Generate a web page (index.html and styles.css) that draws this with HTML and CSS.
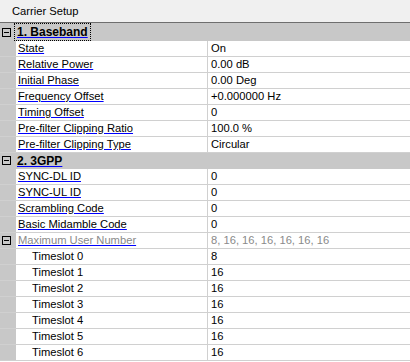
FILE: index.html
```html
<!DOCTYPE html>
<html>
<head>
<meta charset="utf-8">
<link rel="stylesheet" href="styles.css">
</head>
<body>
<div class="panel">
  <div class="title">Carrier Setup</div>
  <div class="grid">
    <div class="row cat">
      <div class="margin"><svg class="box" width="9" height="9" viewBox="0 0 9 9"><rect x="0.5" y="0.5" width="8" height="8" fill="none" stroke="#000"/><line x1="2" y1="4.5" x2="7" y2="4.5" stroke="#000"/></svg></div>
      <div class="catlabel"><span class="focus"><span class="link">1. Baseband</span></span></div>
    </div>
    <div class="row"><div class="margin"></div><div class="label"><span class="link">State</span></div><div class="value">On</div></div>
    <div class="row"><div class="margin"></div><div class="label"><span class="link">Relative Power</span></div><div class="value">0.00 dB</div></div>
    <div class="row"><div class="margin"></div><div class="label"><span class="link">Initial Phase</span></div><div class="value">0.00 Deg</div></div>
    <div class="row"><div class="margin"></div><div class="label"><span class="link">Frequency Offset</span></div><div class="value">+0.000000 Hz</div></div>
    <div class="row"><div class="margin"></div><div class="label"><span class="link">Timing Offset</span></div><div class="value">0</div></div>
    <div class="row"><div class="margin"></div><div class="label"><span class="link">Pre-filter Clipping Ratio</span></div><div class="value">100.0 %</div></div>
    <div class="row"><div class="margin"></div><div class="label"><span class="link">Pre-filter Clipping Type</span></div><div class="value">Circular</div></div>
    <div class="row cat">
      <div class="margin"><svg class="box" width="9" height="9" viewBox="0 0 9 9"><rect x="0.5" y="0.5" width="8" height="8" fill="none" stroke="#000"/><line x1="2" y1="4.5" x2="7" y2="4.5" stroke="#000"/></svg></div>
      <div class="catlabel"><span class="plain"><span class="link">2. 3GPP</span></span></div>
    </div>
    <div class="row"><div class="margin"></div><div class="label"><span class="link">SYNC-DL ID</span></div><div class="value">0</div></div>
    <div class="row"><div class="margin"></div><div class="label"><span class="link">SYNC-UL ID</span></div><div class="value">0</div></div>
    <div class="row"><div class="margin"></div><div class="label"><span class="link">Scrambling Code</span></div><div class="value">0</div></div>
    <div class="row"><div class="margin"></div><div class="label"><span class="link">Basic Midamble Code</span></div><div class="value">0</div></div>
    <div class="row disabled">
      <div class="margin"><svg class="box" width="9" height="9" viewBox="0 0 9 9"><rect x="0.5" y="0.5" width="8" height="8" fill="none" stroke="#000"/><line x1="2" y1="4.5" x2="7" y2="4.5" stroke="#000"/></svg></div>
      <div class="label"><span class="link">Maximum User Number</span></div><div class="value">8, 16, 16, 16, 16, 16, 16</div>
    </div>
    <div class="row sub"><div class="margin"></div><div class="label">Timeslot 0</div><div class="value">8</div></div>
    <div class="row sub"><div class="margin"></div><div class="label">Timeslot 1</div><div class="value">16</div></div>
    <div class="row sub"><div class="margin"></div><div class="label">Timeslot 2</div><div class="value">16</div></div>
    <div class="row sub"><div class="margin"></div><div class="label">Timeslot 3</div><div class="value">16</div></div>
    <div class="row sub"><div class="margin"></div><div class="label">Timeslot 4</div><div class="value">16</div></div>
    <div class="row sub"><div class="margin"></div><div class="label">Timeslot 5</div><div class="value">16</div></div>
    <div class="row sub"><div class="margin"></div><div class="label">Timeslot 6</div><div class="value">16</div></div>
  </div>
</div>
</body>
</html>
```
FILE: styles.css
```css
html, body {
  margin: 0;
  padding: 0;
  background: #ffffff;
}
body {
  font-family: "Liberation Sans", Arial, sans-serif;
  font-size: 11.2px;
  color: #000;
}
.panel {
  width: 410px;
  height: 362px;
  overflow: hidden;
  background: #ffffff;
}
.title {
  height: 22px;
  line-height: 23px;
  padding-left: 12px;
  background: #f0f0f0;
  border-bottom: 1px solid #6e6e6e;
}
.grid {
  border-top: 2px solid #c8c8c8;
  display: flex;
  flex-direction: column;
}
.row {
  display: flex;
  height: 15px;
  line-height: 15px;
  border-bottom: 1px solid #d0d0d0;
}
.margin {
  width: 16px;
  flex: none;
  background: #c8c8c8;
  display: flex;
  align-items: center;
  padding-left: 2px;
  box-sizing: border-box;
}
.box {
  display: block;
}
.label {
  width: 192px;
  flex: none;
  padding-left: 1px;
  border-right: 1px solid #d0d0d0;
  box-sizing: border-box;
  white-space: nowrap;
  overflow: hidden;
}
.value {
  padding-left: 3px;
  white-space: nowrap;
}
.link {
  text-decoration: underline;
  text-decoration-color: #0000ff;
  text-underline-offset: 1px;
  padding: 0 1px;
}
.cat {
  background: #c8c8c8;
  border-bottom-color: #c8c8c8;
}
.catlabel {
  display: flex;
  align-items: stretch;
  font-weight: bold;
  font-size: 12px;
}
.focus {
  display: block;
  margin-top: -2px;
  height: 16px;
  line-height: 17px;
  padding: 0 1px 0 1px;
  border: 1px dotted #000;
  margin-left: -2px;
}
.plain {
  display: block;
  line-height: 16px;
}
.disabled .label,
.disabled .value {
  color: #8a8a8a;
}
.sub .label {
  padding-left: 16px;
}
```
